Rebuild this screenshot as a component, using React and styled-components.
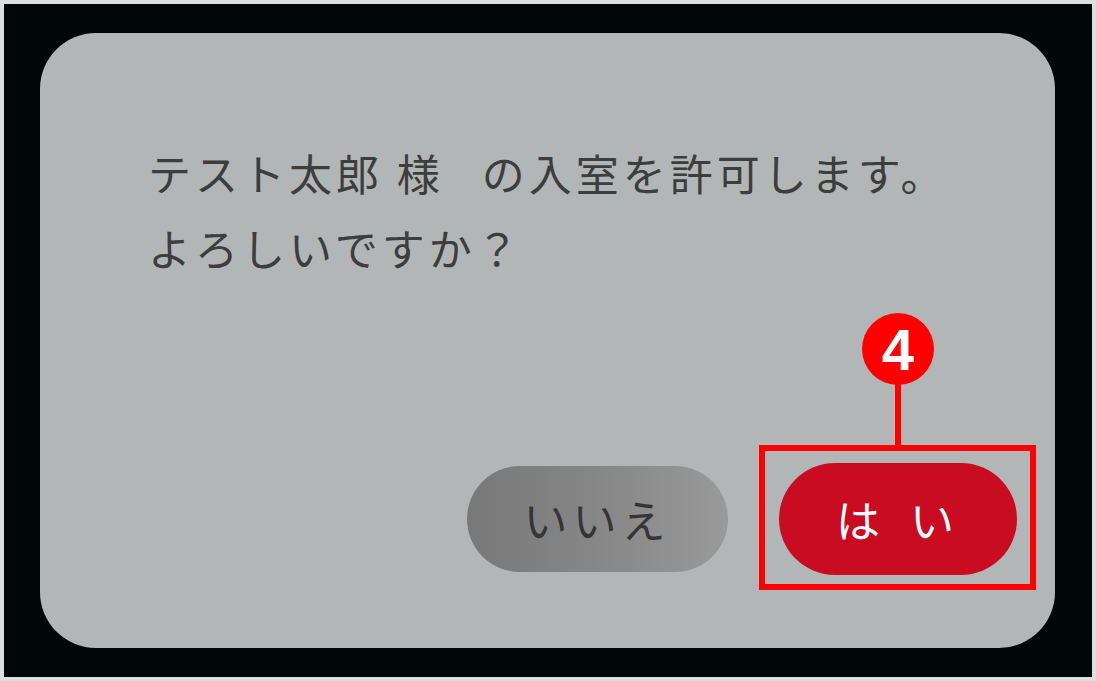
import React from "react";
import styled, { createGlobalStyle } from "styled-components";

const GlobalStyle = createGlobalStyle`
  html, body {
    margin: 0;
    padding: 0;
    background: #ffffff;
  }
  * {
    box-sizing: border-box;
  }
`;

const Frame = styled.div`
  width: 1096px;
  height: 681px;
  border: 4px solid #dcdddd;
  background: #010608;
  padding: 29px 37px 29px 36px;
  display: flex;
`;

const Dialog = styled.div`
  flex: 1;
  background: #b3b6b6;
  border-radius: 56px;
  padding: 102px 38px 73px 108px;
  display: flex;
  flex-direction: column;
  font-family: "Noto Sans CJK JP", "Noto Sans", sans-serif;
`;

const Message = styled.p`
  margin: 0;
  font-size: 43px;
  line-height: 75px;
  letter-spacing: 4px;
  color: #3c3d3d;
  white-space: pre-line;
`;

const Actions = styled.div`
  margin-top: auto;
  display: flex;
  justify-content: flex-end;
  align-items: center;
  gap: 51px;
`;

const Pill = styled.button`
  border: none;
  border-radius: 999px;
  font-family: inherit;
  font-size: 44px;
  display: flex;
  align-items: center;
  justify-content: center;
  cursor: pointer;
  width: ${(p) => p.$w}px;
  height: ${(p) => p.$h}px;
`;

const CancelButton = styled(Pill)`
  background: linear-gradient(90deg, #787878 0%, #8a8a8a 60%, #9a9a9a 100%);
  color: #353535;
  letter-spacing: 5px;
  padding-left: 5px;
`;

const ConfirmButton = styled(Pill)`
  background: #c90c22;
  color: #ffffff;
  letter-spacing: 30px;
  padding-left: 30px;
`;

const Highlight = styled.div`
  position: relative;
  display: flex;
`;

const MarkBox = styled.div`
  position: absolute;
  top: -18px;
  left: -20px;
  right: -19px;
  bottom: -15px;
  border: 6px solid #ff0000;
  pointer-events: none;
`;

const MarkLine = styled.div`
  position: absolute;
  top: -79px;
  left: 50%;
  width: 6px;
  height: 62px;
  margin-left: -3px;
  background: #ff0000;
`;

const MarkBadge = styled.div`
  position: absolute;
  top: -150px;
  left: 50%;
  width: 72px;
  height: 72px;
  margin-left: -36px;
  border-radius: 50%;
  background: #ff0000;
  color: #ffffff;
  font-family: "Liberation Sans", Arial, sans-serif;
  font-weight: 700;
  font-size: 58px;
  line-height: 74px;
  text-align: center;
`;

export default function App() {
  return (
    <>
      <GlobalStyle />
      <Frame>
        <Dialog>
          <Message>
            {"テスト太郎 様\u2002\u2009の入室を許可します。\nよろしいですか？"}
          </Message>
          <Actions>
            <CancelButton $w={261} $h={106}>いいえ</CancelButton>
            <Highlight>
              <ConfirmButton $w={238} $h={112}>はい</ConfirmButton>
              <MarkBox />
              <MarkLine />
              <MarkBadge>4</MarkBadge>
            </Highlight>
          </Actions>
        </Dialog>
      </Frame>
    </>
  );
}
